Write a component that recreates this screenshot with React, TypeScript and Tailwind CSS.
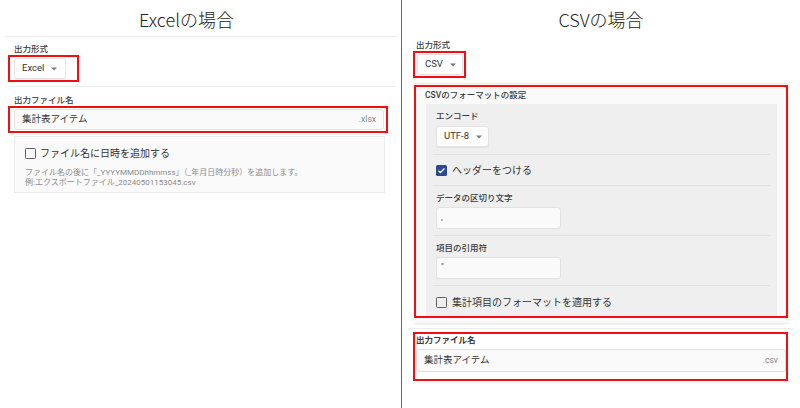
const font = "font-['Roboto','Noto_Sans_CJK_JP',sans-serif]";
const titleFont = "font-['Noto_Sans_CJK_JP',sans-serif] font-light";

const Caret = () => (
  <svg width="6" height="4" viewBox="0 0 6 4" className="shrink-0">
    <path d="M0 0.5h6L3 3.5z" fill="#7a7a7a" />
  </svg>
);

const Select = ({ label, width }: { label: string; width: string }) => (
  <div
    className={`${width} h-[21px] flex items-center pl-[7px] gap-[7px] bg-white border border-[#e4e4e4] rounded-[3px] shadow-[0_1px_1px_rgba(0,0,0,0.06)] text-[9.5px] text-[#333]`}
  >
    <span>{label}</span>
    <Caret />
  </div>
);

const Checkbox = ({ checked }: { checked?: boolean }) =>
  checked ? (
    <div className="w-[11px] h-[11px] rounded-[1.5px] bg-[#2a4a8c] flex items-center justify-center shrink-0">
      <svg width="9" height="9" viewBox="0 0 24 24">
        <path d="M4 12.5l5 5L20 6.5" stroke="white" strokeWidth="3.5" fill="none" />
      </svg>
    </div>
  ) : (
    <div className="w-[11px] h-[11px] rounded-[1.5px] border-[1.5px] border-[#5c5c5c] shrink-0" />
  );

const Label = ({ children, className = "" }: { children: string; className?: string }) => (
  <div className={`text-[8.5px] leading-[12px] font-medium text-[#3a3a3a] ${className}`}>{children}</div>
);

const FileInput = ({ ext }: { ext: string }) => (
  <div className="h-full flex items-center justify-between px-[7px] bg-[#fafafa] border border-[#e2e2e2] rounded-[3px] text-[9.5px] text-[#333]">
    <span>集計表アイテム</span>
    <span className="text-[8.5px] text-[#888]">{ext}</span>
  </div>
);

const TextBox = ({ value }: { value: string }) => (
  <div className="mt-[3px] ml-[3px] w-[125px] h-[22px] flex items-center px-[4px] bg-[#fafafa] border border-[#e2e2e2] rounded-[3px] text-[9px] text-[#555]">
    {value}
  </div>
);

const Divider = () => <div className="border-b border-[#e2e2e2]" />;

export default function App() {
  return (
    <div className={`flex w-[800px] h-[408px] bg-white text-[#333] ${font}`}>
      {/* Excel */}
      <div className="w-[402px] h-full border-r border-[#666] shrink-0">
        <div className={`mx-[5px] h-[37px] pt-[2px] pr-[28px] border-b border-[#ececec] flex items-center justify-center text-[18px] text-[#222] ${titleFont}`}>
          Excelの場合
        </div>
        <Label className="mt-[6px] ml-[14px]">出力形式</Label>
        <div className="ml-[8px] w-[71px] h-[27px] border-2 border-[#f01010] flex items-center pl-[4px]">
          <Select label="Excel" width="w-[52px]" />
        </div>
        <div className="mx-[6px] mt-[4px] border-b border-[#ececec]" />
        <Label className="mt-[7px] ml-[14px]">出力ファイル名</Label>
        <div className="ml-[8px] w-[380px] h-[27px] border-2 border-[#f01010] pl-[4px] pr-[2px] py-[1px]">
          <FileInput ext=".xlsx" />
        </div>
        <div className="mt-[3px] ml-[14px] w-[371px] h-[57px] border border-[#ececec] bg-[#fafafa] pt-[11px] px-[10px]">
          <div className="h-[11px] flex items-center gap-[4px] text-[10px] text-[#333]">
            <Checkbox />
            <span>ファイル名に日時を追加する</span>
          </div>
          <div className="mt-[9px] text-[8px] leading-[10px] text-[#8a8a8a]">
            <div>ファイル名の後に「_YYYYMMDDhhmmss」（_年月日時分秒）を追加します。</div>
            <div>例:エクスポートファイル_20240501153045.csv</div>
          </div>
        </div>
      </div>

      {/* CSV */}
      <div className="flex-1 h-full">
        <div className={`h-[37px] pt-[2px] flex items-center justify-center text-[18px] text-[#222] ${titleFont}`}>
          CSVの場合
        </div>
        <Label className="mt-[2px] ml-[14px]">出力形式</Label>
        <div className="ml-[11px] w-[53px] h-[27px] border-2 border-[#f01010] flex items-center pl-[2px]">
          <Select label="CSV" width="w-[46px]" />
        </div>

        <div className="mt-[5px] ml-[12px] w-[374px] bg-[#fafafa] border-t border-[#e6e6e6] pt-[1px] pb-[5px] shadow-[0_1px_2px_rgba(0,0,0,0.1)]">
          <div className="border-2 border-[#f01010] pt-[2px]">
            <Label className="ml-[9px]">CSVのフォーマットの設定</Label>
            <div className="mt-[3px] ml-[10px] w-[351px] bg-[#efefef] px-[7px] pt-[6px] pb-[8px]">
              <Label className="ml-[3px]">エンコード</Label>
              <div className="mt-[4px] ml-[3px]">
                <Select label="UTF-8" width="w-[53px]" />
              </div>
              <div className="mt-[7px]" />
              <Divider />
              <div className="mt-[10px] ml-[3px] h-[11px] flex items-center gap-[5px] text-[10px]">
                <Checkbox checked />
                <span>ヘッダーをつける</span>
              </div>
              <div className="mt-[9px]" />
              <Divider />
              <Label className="mt-[6px] ml-[3px]">データの区切り文字</Label>
              <TextBox value="," />
              <div className="mt-[6px]" />
              <Divider />
              <Label className="mt-[6px] ml-[3px]">項目の引用符</Label>
              <TextBox value={'"'} />
              <div className="mt-[6px]" />
              <Divider />
              <div className="mt-[11px] ml-[3px] h-[11px] flex items-center gap-[5px] text-[10px]">
                <Checkbox />
                <span>集計項目のフォーマットを適用する</span>
              </div>
            </div>
          </div>
        </div>

        <div className="mx-[6px] mt-[5px] border-b border-[#ececec]" />
        <div className="mt-[3px] ml-[11px] w-[375px] h-[49px] border-2 border-[#f01010] pl-[1px]">
          <Label className="font-semibold">出力ファイル名</Label>
          <div className="mt-[3px] h-[23px]">
            <FileInput ext=".csv" />
          </div>
        </div>
      </div>
    </div>
  );
}
